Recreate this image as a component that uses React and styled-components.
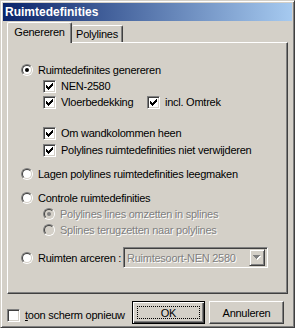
import React from 'react';
import styled, { createGlobalStyle, css } from 'styled-components';

const GlobalStyle = createGlobalStyle`
  html, body {
    margin: 0;
    padding: 0;
    background: #d4d0c8;
  }
  body {
    font-family: "Liberation Sans", Arial, sans-serif;
    font-size: 11px;
    letter-spacing: -0.25px;
    color: #000;
  }
`;

const Window = styled.div`
  box-sizing: border-box;
  width: 295px;
  height: 328px;
  background: #d4d0c8;
  border: 1px solid;
  border-color: #d4d0c8 #404040 #404040 #d4d0c8;
  box-shadow: inset 1px 1px #fff, inset -1px -1px #808080;
  padding: 2px;
  display: flex;
  flex-direction: column;
`;

const TitleBar = styled.div`
  flex: 0 0 18px;
  display: flex;
  align-items: center;
  padding-left: 2px;
  background: linear-gradient(to right, #0a246a, #a6caf0);
  color: #fff;
  font-weight: bold;
  font-size: 12px;
  letter-spacing: 0;
`;

const Body = styled.div`
  flex: 0 0 auto;
  display: flex;
  flex-direction: column;
  padding: 0 4px;
`;

const TabStrip = styled.div`
  height: 21px;
  display: flex;
  align-items: flex-end;
  position: relative;
  z-index: 1;
`;

const Tab = styled.div`
  box-sizing: border-box;
  width: ${p => p.$w}px;
  height: ${p => (p.$active ? 21 : 17)}px;
  margin-bottom: ${p => (p.$active ? -1 : 0)}px;
  background: #d4d0c8;
  border-top: 1px solid #fff;
  border-left: ${p => (p.$active ? '1px solid #fff' : 'none')};
  border-right: 1px solid #404040;
  box-shadow: inset -1px 0 #808080;
  border-radius: 2px 2px 0 0;
  display: flex;
  align-items: center;
  justify-content: center;
  padding-bottom: ${p => (p.$active ? 2 : 0)}px;
  white-space: nowrap;
`;

const Panel = styled.div`
  box-sizing: border-box;
  height: 252px;
  border-top: 1px solid #fff;
  border-left: 1px solid #fff;
  border-right: 1px solid #404040;
  border-bottom: 1px solid #404040;
  box-shadow: inset -1px -1px #808080;
  padding: 19px 0 0 13px;
  display: flex;
  flex-direction: column;
`;

const Row = styled.div`
  display: flex;
  align-items: center;
  height: ${p => p.$h || 16}px;
  margin-top: ${p => p.$mt || 0}px;
  margin-left: ${p => p.$indent || 0}px;
`;

const Option = styled.label`
  display: flex;
  align-items: center;
  gap: 5px;
  flex: none;
  width: ${p => (p.$w ? `${p.$w}px` : 'auto')};
  white-space: nowrap;
  line-height: 16px;
`;

const Label = styled.span`
  color: ${p => (p.$disabled ? '#808080' : '#000')};
  text-shadow: ${p => (p.$disabled ? '1px 1px 0 #fff' : 'none')};
  u {
    text-decoration: underline;
  }
`;

const RadioOuter = styled.span`
  box-sizing: border-box;
  width: 12px;
  height: 12px;
  flex: none;
  border-radius: 50%;
  border: 1px solid;
  border-color: #808080 #fff #fff #808080;
  display: flex;
`;

const RadioInner = styled.span`
  box-sizing: border-box;
  flex: 1;
  border-radius: 50%;
  border: 1px solid;
  border-color: #404040 #d4d0c8 #d4d0c8 #404040;
  background: ${p => (p.$disabled ? '#d4d0c8' : '#fff')};
  display: flex;
  align-items: center;
  justify-content: center;
`;

const Dot = styled.span`
  width: 4px;
  height: 4px;
  border-radius: 50%;
  background: ${p => (p.$disabled ? '#808080' : '#000')};
`;

const Box = styled.span`
  box-sizing: border-box;
  width: 13px;
  height: 13px;
  flex: none;
  border: 1px solid;
  border-color: #808080 #fff #fff #808080;
  box-shadow: inset 1px 1px #404040, inset -1px -1px #d4d0c8;
  background: #fff;
  display: flex;
  align-items: center;
  justify-content: center;
`;

const Combo = styled.div`
  box-sizing: border-box;
  width: 145px;
  height: 21px;
  flex: none;
  border: 1px solid;
  border-color: #808080 #fff #fff #808080;
  box-shadow: inset 1px 1px #404040, inset -1px -1px #d4d0c8;
  background: #d4d0c8;
  display: flex;
  align-items: center;
  padding: 0 2px 0 3px;
  color: #808080;
  text-shadow: 1px 1px 0 #fff;
  white-space: nowrap;
`;

const ComboText = styled.span`
  flex: 1;
`;

const ComboButton = styled.span`
  box-sizing: border-box;
  width: 16px;
  height: 17px;
  flex: none;
  background: #d4d0c8;
  border: 1px solid;
  border-color: #d4d0c8 #404040 #404040 #d4d0c8;
  box-shadow: inset 1px 1px #fff, inset -1px -1px #808080;
  display: flex;
  align-items: center;
  justify-content: center;
`;

const Footer = styled.div`
  flex: 1;
  display: flex;
  align-items: flex-start;
  padding: 0 0 0 4px;
`;

const FooterCheck = styled(Option)`
  margin-top: 15px;
  line-height: 13px;
`;

const Buttons = styled.div`
  margin-top: 7px;
  display: flex;
  gap: 4px;
`;

const Button = styled.button`
  box-sizing: border-box;
  width: ${p => p.$w}px;
  height: 23px;
  flex: none;
  padding: 0;
  font: inherit;
  letter-spacing: inherit;
  color: #000;
  background: #d4d0c8;
  border: 1px solid;
  border-color: #fff #404040 #404040 #fff;
  box-shadow: inset -1px -1px #808080;
  display: flex;
  align-items: center;
  justify-content: center;
  position: relative;
  ${p =>
    p.$default &&
    css`
      border: 1px solid #000;
      box-shadow: inset 1px 1px #fff, inset -1px -1px #404040, inset -2px -2px #808080;
    `}
`;

const FocusRing = styled.span`
  position: absolute;
  inset: 4px;
  border: 1px dotted #000;
`;

const CheckMark = () => (
  <svg width="7" height="7" viewBox="0 0 7 7" shapeRendering="crispEdges">
    <path
      fill="#000"
      d="M6 0h1v1h-1z M5 1h2v1h-2z M0 2h1v1h-1z M4 2h3v1h-3z M0 3h2v1h-2z M3 3h3v1h-3z M0 4h5v1h-5z M1 5h3v1h-3z M2 6h1v1h-1z"
    />
  </svg>
);

const Arrow = () => (
  <svg width="8" height="5" viewBox="0 0 8 5" shapeRendering="crispEdges">
    <path fill="#fff" d="M1 1h7v1h-7z M2 2h5v1h-5z M3 3h3v1h-3z M4 4h1v1h-1z" />
    <path fill="#808080" d="M0 0h7v1h-7z M1 1h5v1h-5z M2 2h3v1h-3z M3 3h1v1h-1z" />
  </svg>
);

const Radio = ({ checked, disabled, children, width }) => (
  <Option $w={width}>
    <RadioOuter>
      <RadioInner $disabled={disabled}>{checked && <Dot $disabled={disabled} />}</RadioInner>
    </RadioOuter>
    <Label $disabled={disabled}>{children}</Label>
  </Option>
);

const Check = ({ checked, children, width }) => (
  <Option $w={width}>
    <Box>{checked && <CheckMark />}</Box>
    <Label>{children}</Label>
  </Option>
);

export default function App() {
  return (
    <>
      <GlobalStyle />
      <Window>
        <TitleBar>Ruimtedefinities</TitleBar>
        <Body>
          <TabStrip>
            <Tab $active $w={65}>Genereren</Tab>
            <Tab $w={51}>Polylines</Tab>
          </TabStrip>
          <Panel>
            <Row>
              <Radio checked>Ruimtedefinites genereren</Radio>
            </Row>
            <Row $indent={22}>
              <Check checked>NEN-2580</Check>
            </Row>
            <Row $indent={22}>
              <Check checked width={104}>Vloerbedekking</Check>
              <Check checked>incl. Omtrek</Check>
            </Row>
            <Row $indent={22} $mt={15}>
              <Check checked>Om wandkolommen heen</Check>
            </Row>
            <Row $indent={22} $mt={1}>
              <Check checked>Polylines ruimtedefinities niet verwijderen</Check>
            </Row>
            <Row $mt={8}>
              <Radio>Lagen polylines ruimtedefinities leegmaken</Radio>
            </Row>
            <Row $mt={8}>
              <Radio>Controle ruimtedefinities</Radio>
            </Row>
            <Row $indent={22}>
              <Radio checked disabled>Polylines lines omzetten in splines</Radio>
            </Row>
            <Row $indent={22}>
              <Radio disabled>Splines terugzetten naar polylines</Radio>
            </Row>
            <Row $mt={9} $h={21}>
              <Radio width={102}>Ruimten arceren :</Radio>
              <Combo>
                <ComboText>Ruimtesoort-NEN 2580</ComboText>
                <ComboButton>
                  <Arrow />
                </ComboButton>
              </Combo>
            </Row>
          </Panel>
        </Body>
        <Footer>
          <FooterCheck $w={125}>
            <Box />
            <Label>
              <u>t</u>oon scherm opnieuw
            </Label>
          </FooterCheck>
          <Buttons>
            <Button $default $w={73}>
              OK
              <FocusRing />
            </Button>
            <Button $w={75}>Annuleren</Button>
          </Buttons>
        </Footer>
      </Window>
    </>
  );
}
